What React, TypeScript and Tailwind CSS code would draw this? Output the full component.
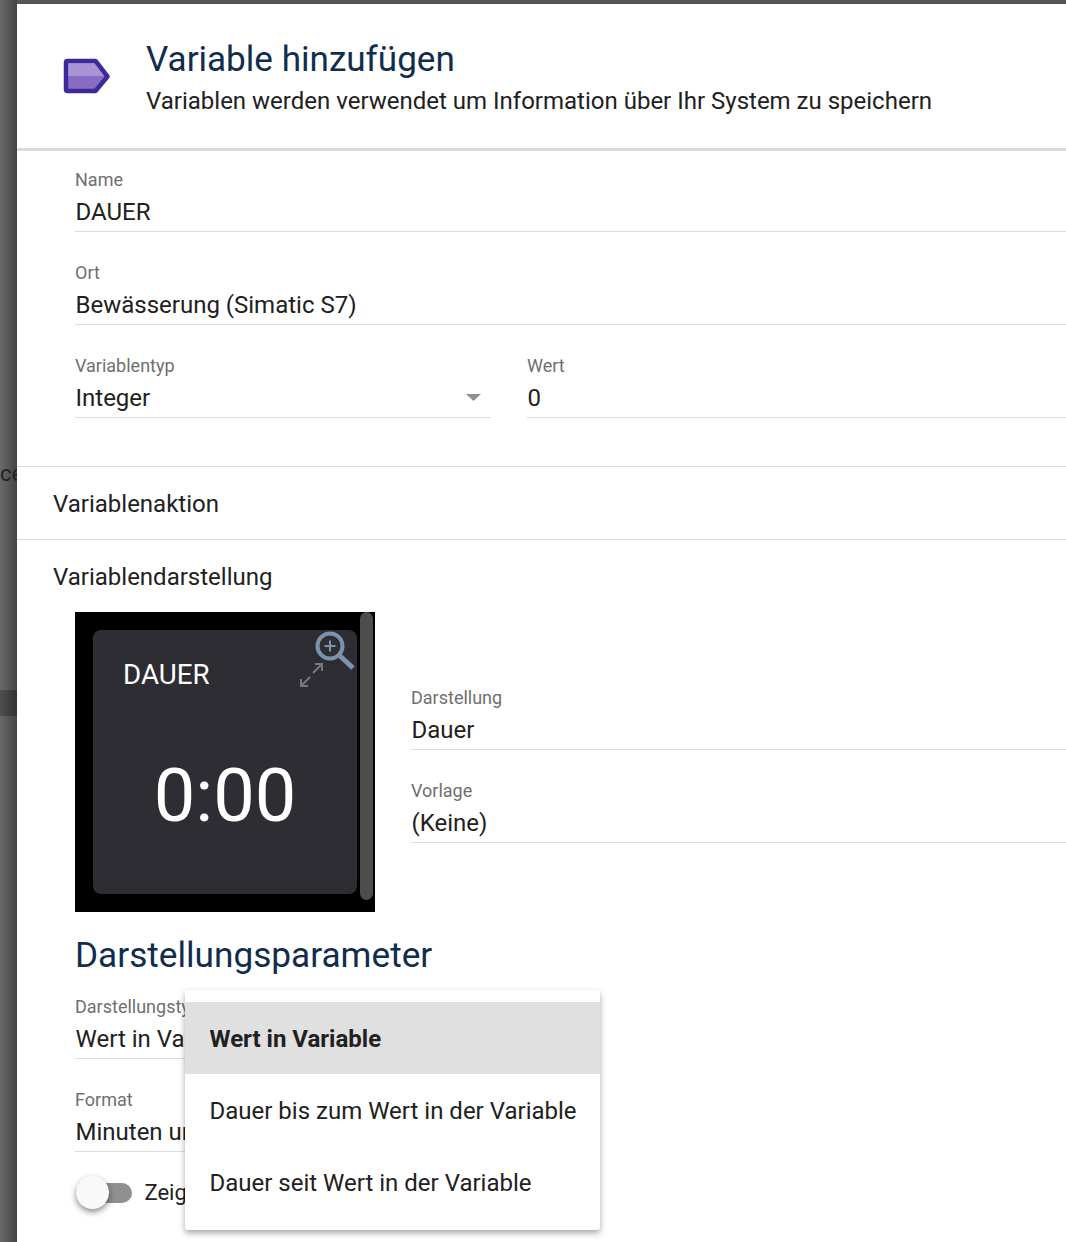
import React from "react";

function Field({ label, value, arrow, className = "" }: { label: string; value: string; arrow?: boolean; className?: string }) {
  return (
    <div className={"relative h-[62px] border-b border-[#dcdcdc] " + className}>
      <div className="h-[20px] text-[18px] leading-[20px] text-[#6f6f6f]">{label}</div>
      <div className="mt-[7px] h-[30px] pl-[0.5px] text-[24px] leading-[30px] text-[#212121]">{value}</div>
      {arrow && (
        <svg className="absolute right-[10px] top-[38px]" width="15" height="7" viewBox="0 0 15 7">
          <path d="M0 0H15L7.500 7Z" fill="#8f8f8f" />
        </svg>
      )}
    </div>
  );
}

export default function App() {
  return (
    <div className="relative flex h-[1242px] w-[1066px] overflow-hidden bg-[#555] font-['Roboto',sans-serif]">
      <div className="relative w-[17px] shrink-0 bg-gradient-to-r from-[#6a6a6a] to-[#444]">
        <div className="absolute top-[690px] h-[26px] w-full bg-black/25" />
        <div className="absolute left-0 top-[460px] w-[17px] overflow-hidden text-[22px] leading-[28px] text-[#222]">ce</div>
      </div>
      <div className="flex-1 pt-[4px]">
        <div className="h-[1238px] bg-white">
          <div className="flex h-[147px] items-start border-b-[3px] border-[#dcdcdc]">
            <svg className="ml-[46px] mt-[54px]" width="48" height="36" viewBox="0 0 48 36">
              <path d="M4.500 3H32.500L44.500 18.500L32.500 33H4.500Q3 33 3 31.500V4.500Q3 3 4.500 3Z" fill="#8a6cc4" stroke="#3d2a9a" strokeWidth="4.500" strokeLinejoin="round" />
              <path d="M5.250 5.250H31.500L41 18H5.250Z" fill="#a995d6" />
            </svg>
            <div className="ml-[35px] mt-[34px]">
              <div className="text-[35.1px] leading-[42px] text-[#112d4e]">Variable hinzufügen</div>
              <div className="mt-[6px] text-[24px] leading-[30px] text-[#212121]">Variablen werden verwendet um Information über Ihr System zu speichern</div>
            </div>
          </div>
          <div className="pl-[58px] pt-[19px]">
            <Field label="Name" value="DAUER" />
            <Field label="Ort" value="Bewässerung (Simatic S7)" className="mt-[31px]" />
            <div className="mt-[31px] flex gap-[36px]">
              <Field label="Variablentyp" value="Integer" arrow className="w-[416px]" />
              <Field label="Wert" value="0" className="flex-1" />
            </div>
          </div>
          <div className="mt-[48px] flex h-[74px] items-center border-y border-[#dcdcdc] pl-[36px] pt-[2px] text-[24px] text-[#212121]">Variablenaktion</div>
          <div className="flex h-[72px] items-center pl-[36px] pt-[2px] text-[24px] text-[#212121]">Variablendarstellung</div>
          <div className="pl-[58px]">
            <div className="flex items-center gap-[36px]">
              <div className="relative h-[300px] w-[300px] shrink-0 bg-black p-[18px]">
                <div className="relative h-[264px] w-[264px] rounded-[8px] bg-[#2d2d33] text-white">
                  <div className="absolute left-[30px] top-[28px] text-[27.7px] leading-[34px]">DAUER</div>
                  <div className="absolute inset-x-0 top-[126px] text-center text-[74px] leading-[80px]">0:00</div>
                  <svg className="absolute left-[205px] top-[32px]" width="28" height="26" viewBox="0 0 28 26" fill="none" stroke="#77777d" strokeWidth="2">
                    <path d="M3 24L12 15M3 17V24H10M15 11L24 2M17 2H24V9" />
                  </svg>
                  <svg className="absolute left-[222px] top-[0px]" width="42" height="42" viewBox="0 0 42 42" fill="none" stroke="#7c93ab">
                    <circle cx="15" cy="16" r="12.500" strokeWidth="4" />
                    <path d="M24 25L38 38" strokeWidth="5" />
                    <path d="M15 10.500V21.500M9.500 16H20.500" strokeWidth="2" />
                  </svg>
                </div>
                <div className="absolute right-[2px] top-0 h-[288px] w-[13px] rounded-full bg-[#4d4d4d]" />
              </div>
              <div className="flex-1 pt-[7px]">
                <Field label="Darstellung" value="Dauer" />
                <Field label="Vorlage" value="(Keine)" className="mt-[31px]" />
              </div>
            </div>
            <div className="mt-[21px] text-[35.2px] leading-[44px] text-[#112d4e]">Darstellungsparameter</div>
            <div className="mt-[20px]">
              <Field label="Darstellungstyp" value="Wert in Variable" className="w-[416px]" />
              <Field label="Format" value="Minuten und Sekunden" className="mt-[31px] w-[416px]" />
            </div>
            <div className="mt-[24px] flex h-[34px] items-center">
              <div className="relative ml-[1px] h-[20px] w-[56px] rounded-full bg-[#8f8f8f]">
                <div className="absolute left-0 top-[-7px] h-[33px] w-[33px] rounded-full bg-[#f9f9f9] shadow-[0_3px_6px_rgba(0,0,0,0.45)]" />
              </div>
              <div className="ml-[12.5px] pb-[2px] text-[22px] text-[#212121]">Zeige</div>
            </div>
          </div>
        </div>
      </div>
      <div className="absolute left-[185px] top-[990px] w-[415px] rounded-[3px] bg-white py-[12px] text-[24px] text-[#212121] shadow-[0_3px_6px_rgba(0,0,0,0.35)]">
        <div className="flex h-[72px] items-center whitespace-nowrap bg-[#e0e0e0] pl-[24.5px] pt-[2px] font-bold">Wert in Variable</div>
        <div className="flex h-[72px] items-center whitespace-nowrap pl-[24.5px] pt-[2px]">Dauer bis zum Wert in der Variable</div>
        <div className="flex h-[72px] items-center whitespace-nowrap pl-[24.5px] pt-[2px]">Dauer seit Wert in der Variable</div>
      </div>
    </div>
  );
}
